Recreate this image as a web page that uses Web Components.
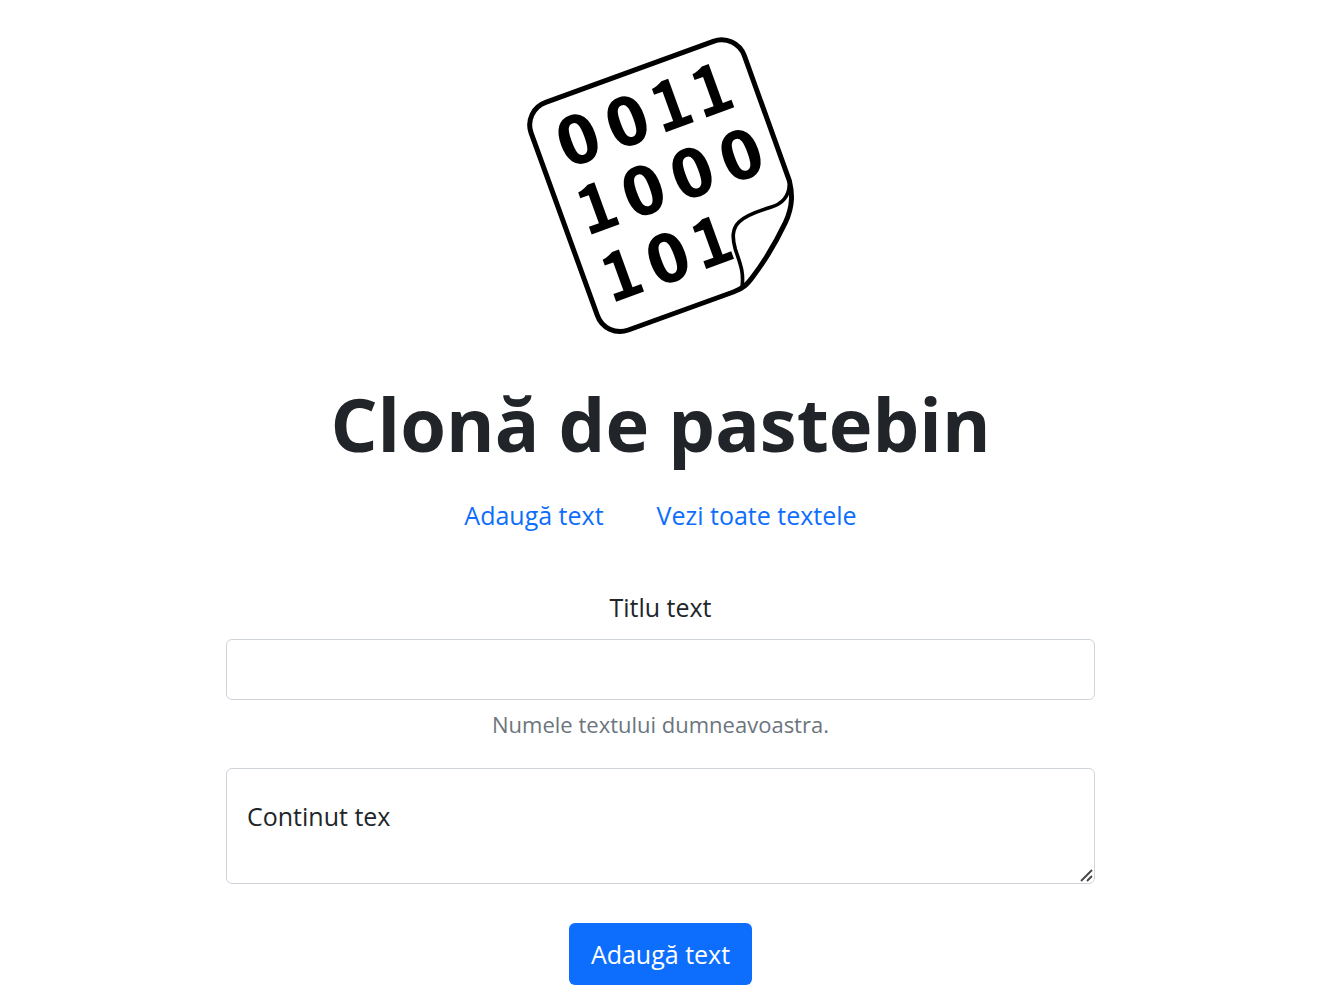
<!DOCTYPE html>
<html lang="ro">
<head>
<meta charset="utf-8">
<title>Clonă de pastebin</title>
<style>
body { margin: 0; background: #fff; color: #212529; font-family: "Segoe UI", "Open Sans", "Noto Sans", sans-serif; font-size: 25px; line-height: 38px; }
</style>
</head>
<body>
<paste-page>
  <paste-logo slot="logo"></paste-logo>
  <span slot="title">Clonă de pastebin</span>
  <paste-nav slot="nav"></paste-nav>
  <paste-form></paste-form>
</paste-page>
<script>
class PastePage extends HTMLElement {
  constructor() {
    super();
    this.attachShadow({ mode: "open" }).innerHTML = `
      <style>
        :host { display: block; padding: 20px 12px 15px 0; }
        main { display: flex; flex-direction: column; align-items: center; width: 90%; max-width: 869px; margin: 0 auto; }
        h1 { margin: 27px 0 25px; font-size: 74px; line-height: 94px; font-weight: 700; white-space: nowrap; }
        .content { width: 100%; margin-top: 54px; }
      </style>
      <main>
        <slot name="logo"></slot>
        <h1><slot name="title"></slot></h1>
        <slot name="nav"></slot>
        <div class="content"><slot></slot></div>
      </main>`;
  }
}
class PasteLogo extends HTMLElement {
  constructor() {
    super();
    this.attachShadow({ mode: "open" }).innerHTML = `
      <style>
        :host { display: block; }
        svg { display: block; width: 300px; height: 330px; }
        text { font-family: "DejaVu Sans Condensed", "DejaVu Sans", sans-serif; font-stretch: condensed; font-weight: 700; font-size: 200px; text-anchor: middle; }
        .one { font-family: "Noto Sans CJK SC", sans-serif; font-stretch: normal; }
      </style>
      <svg viewBox="3 0 900 990" aria-hidden="true">
        <g fill="none" stroke="#000" stroke-width="15" stroke-linejoin="round">
          <path d="M838 482 L703 107 A72 72 0 0 0 610 64 L107 247 A72 72 0 0 0 63 338 L262 886 A72 72 0 0 0 355 930 L670 816 C700 805 712 793 730 768 C765 722 800 662 826 608 C851 555 846 515 838 482Z"/>
          <path stroke-width="11" d="M838 495 C836 535 812 553 782 562 C742 574 706 587 687 606 C665 628 667 655 676 688 C692 735 702 757 696 803"/>
        </g>
        <g transform="rotate(-20)">
          <text y="478" x="70 226">00</text>
          <text class="one" y="476" x="367 496">11</text>
          <text class="one" y="688" x="53">1</text>
          <text y="690" x="201 357 513">000</text>
          <text class="one" y="903" x="53">1</text>
          <text y="905" x="201">0</text>
          <text class="one" y="903" x="340">1</text>
        </g>
      </svg>`;
  }
}
class PasteNav extends HTMLElement {
  constructor() {
    super();
    this.attachShadow({ mode: "open" }).innerHTML = `
      <style>
        :host { display: block; }
        nav { display: flex; gap: 53px; }
        a { color: #0d6efd; text-decoration: none; }
      </style>
      <nav><a href="#adauga">Adaugă text</a><a href="#toate">Vezi toate textele</a></nav>`;
  }
}
class PasteForm extends HTMLElement {
  constructor() {
    super();
    this.attachShadow({ mode: "open" }).innerHTML = `
      <style>
        :host { display: block; }
        form { display: flex; flex-direction: column; align-items: center; }
        label { margin-bottom: 13px; }
        input, textarea { box-sizing: border-box; width: 100%; border: 1px solid #ced4da; border-radius: 6px; background: #fff; color: inherit; font: inherit; padding: 10px 20px; margin: 0; }
        input { height: 61px; }
        small { margin: 5px 0 25px; font-size: 22px; line-height: 38px; color: #6c757d; }
        .area { position: relative; width: 100%; }
        textarea { display: block; height: 116px; padding: 28px 20px; resize: vertical; overflow: hidden; }
        textarea::-webkit-resizer { background: transparent; }
        .grip { position: absolute; right: 2px; bottom: 2px; width: 13px; height: 13px; pointer-events: none; }
        button { margin-top: 39px; border: 0; border-radius: 6px; background: #0d6efd; color: #fff; font: inherit; padding: 12px 22px; }
      </style>
      <form>
        <label for="titlu">Titlu text</label>
        <input id="titlu" type="text" aria-describedby="ajutor">
        <small id="ajutor">Numele textului dumneavoastra.</small>
        <div class="area">
          <textarea aria-label="Continut text">Continut tex</textarea>
          <svg class="grip" viewBox="0 0 13 13" fill="none" stroke="#444" stroke-width="1.8" aria-hidden="true"><path d="M1 12 L12 1 M7 12 L12 7"/></svg>
        </div>
        <button type="button">Adaugă text</button>
      </form>`;
  }
}
customElements.define("paste-page", PastePage);
customElements.define("paste-logo", PasteLogo);
customElements.define("paste-nav", PasteNav);
customElements.define("paste-form", PasteForm);
</script>
</body>
</html>
